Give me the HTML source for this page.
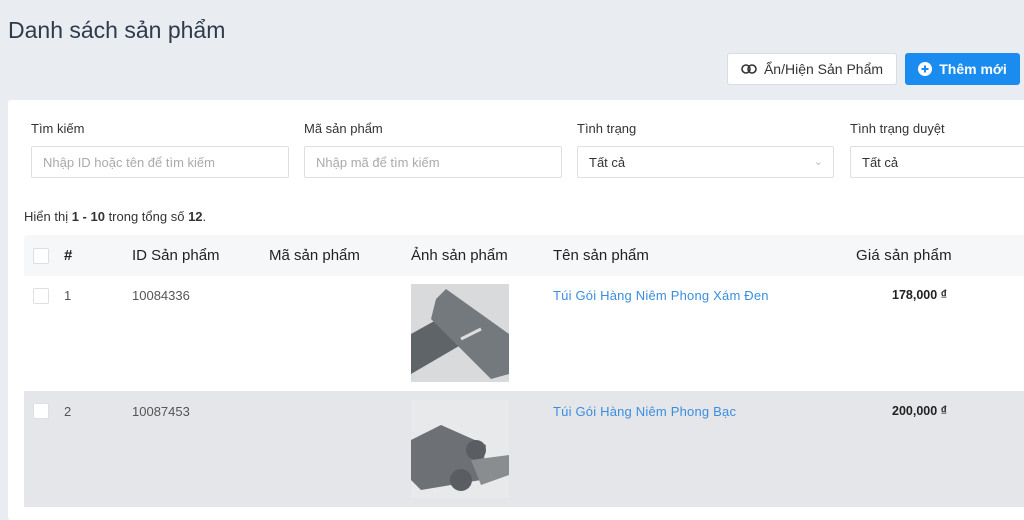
<!DOCTYPE html>
<html><head><meta charset="utf-8"><style>
*{box-sizing:border-box;margin:0;padding:0}
body{width:1024px;height:509px;overflow:hidden;background:#e9edf1;font-family:"Liberation Sans","DejaVu Sans",sans-serif;color:#333;position:relative}
.abs{position:absolute}
h1{position:absolute;left:8px;top:17px;font-size:23px;font-weight:400;color:#2f3a4a}
.btn{position:absolute;top:53px;height:32px;border-radius:3px;font-size:14px;display:flex;align-items:center;justify-content:center;gap:7px}
.card{position:absolute;left:8px;top:100px;width:1030px;height:420px;background:#fff;border-radius:3px}
.lbl{position:absolute;top:121px;font-size:13px;color:#333}
.inp{position:absolute;top:146px;height:32px;border:1px solid #dcdfe4;border-radius:2px;font-size:13px;padding:8px 11px;color:#aaa}
.th{position:absolute;top:247px;font-size:15px;color:#222}
.td{position:absolute;font-size:13px;color:#555}
.cb{position:absolute;left:33px;width:16px;height:16px;border:1px solid #dcdfe4;background:#fff;border-radius:2px}
a{color:#3a8ee0;text-decoration:none}
</style></head><body>
<h1>Danh sách sản phẩm</h1>
<div class="btn" style="left:727px;width:170px;background:#fff;border:1px solid #d9dde2;color:#333">
<svg width="16" height="10" viewBox="0 0 16 10"><circle cx="5" cy="5" r="4" fill="none" stroke="#333" stroke-width="1.6"/><circle cx="11" cy="5" r="4" fill="none" stroke="#333" stroke-width="1.6"/></svg>Ẩn/Hiện Sản Phẩm</div>
<div class="btn" style="left:905px;width:115px;background:#1a8cf0;color:#fff;font-weight:bold">
<svg width="14" height="14" viewBox="0 0 14 14"><circle cx="7" cy="7" r="7" fill="#fff"/><path d="M7 3.5v7M3.5 7h7" stroke="#1a8cf0" stroke-width="2"/></svg>Thêm mới</div>
<div class="card"></div>
<div class="lbl" style="left:31px">Tìm kiếm</div>
<div class="lbl" style="left:304px">Mã sản phẩm</div>
<div class="lbl" style="left:577px">Tình trạng</div>
<div class="lbl" style="left:850px">Tình trạng duyệt</div>
<div class="inp" style="left:31px;width:258px">Nhập ID hoặc tên để tìm kiếm</div>
<div class="inp" style="left:304px;width:258px">Nhập mã để tìm kiếm</div>
<div class="inp" style="left:577px;width:257px;color:#333">Tất cả<span style="position:absolute;right:10px;top:8px;color:#bbb;font-size:11px">&#8964;</span></div>
<div class="inp" style="left:850px;width:200px;color:#333">Tất cả</div>
<div class="td" style="left:24px;top:209px;color:#333">Hiển thị <b>1 - 10</b> trong tổng số <b>12</b>.</div>
<div class="abs" style="left:24px;top:235px;width:1010px;height:41px;background:#f6f7f8;border-radius:4px 0 0 0"></div>
<div class="abs" style="left:24px;top:276px;width:1010px;height:115px;background:#fff"></div>
<div class="abs" style="left:24px;top:391px;width:1010px;height:116px;background:#e5e6e9"></div>
<div class="cb" style="top:248px"></div><div class="cb" style="top:288px"></div><div class="cb" style="top:403px"></div>
<div class="th" style="left:64px;font-weight:bold">#</div>
<div class="th" style="left:132px">ID Sản phẩm</div>
<div class="th" style="left:269px">Mã sản phẩm</div>
<div class="th" style="left:411px">Ảnh sản phẩm</div>
<div class="th" style="left:553px">Tên sản phẩm</div>
<div class="th" style="left:856px;letter-spacing:0.2px">Giá sản phẩm</div>
<div class="td" style="left:64px;top:288px">1</div>
<div class="td" style="left:132px;top:288px">10084336</div>
<div class="td" style="left:553px;top:288px;letter-spacing:0.2px"><a>Túi Gói Hàng Niêm Phong Xám Đen</a></div>
<div class="td" style="left:892px;top:288px;color:#222;font-weight:bold;font-size:12.5px">178,000 ₫</div>
<div class="td" style="left:64px;top:404px">2</div>
<div class="td" style="left:132px;top:404px">10087453</div>
<div class="td" style="left:553px;top:404px;letter-spacing:0.2px"><a>Túi Gói Hàng Niêm Phong Bạc</a></div>
<div class="td" style="left:892px;top:404px;color:#222;font-weight:bold;font-size:12.5px">200,000 ₫</div>
<svg class="abs" style="left:411px;top:284px" width="98" height="98" viewBox="0 0 98 98"><rect width="98" height="98" fill="#d8dadc"/><path d="M0 50 L45 25 L60 55 L0 90Z" fill="#5f6469"/><path d="M25 15 L35 5 L98 50 L98 90 L80 95 L20 35Z" fill="#74797e"/><path d="M50 55 L70 45" stroke="#ddd" stroke-width="3"/></svg>
<svg class="abs" style="left:411px;top:400px" width="98" height="98" viewBox="0 0 98 98"><rect width="98" height="98" fill="#e8e9ea"/><path d="M0 40 L30 25 L75 45 L70 80 L10 90 L0 80Z" fill="#6d7074"/><circle cx="65" cy="50" r="10" fill="#5a5d61"/><circle cx="50" cy="80" r="11" fill="#5a5d61"/><path d="M60 60 L98 55 L98 75 L70 85Z" fill="#8a8d90"/></svg>
</body></html>
